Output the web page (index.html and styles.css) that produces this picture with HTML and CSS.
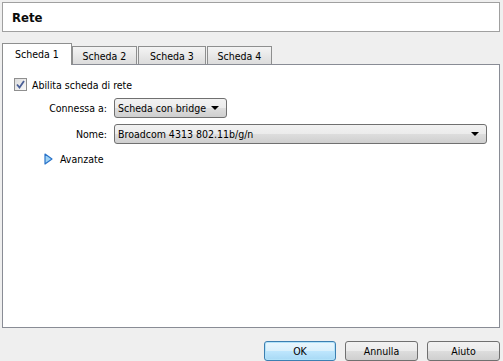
FILE: index.html
```html
<!DOCTYPE html>
<html>
<head>
<meta charset="utf-8">
<link rel="stylesheet" href="styles.css">
</head>
<body>
<div class="dialog">
  <div class="header"><span class="title">Rete</span></div>
  <div class="tabs">
    <div class="tab active">Scheda 1</div>
    <div class="tab t2">Scheda 2</div>
    <div class="tab t3">Scheda 3</div>
    <div class="tab t4">Scheda 4</div>
  </div>
  <div class="panel">
    <label class="check-row">
      <span class="checkbox">
        <svg width="9" height="9" viewBox="0 0 9 9"><path d="M1 4.5 L3.5 7.5 L8 1" fill="none" stroke="#4a5f97" stroke-width="1.8"/></svg>
      </span>
      <span>Abilita scheda di rete</span>
    </label>
    <div class="form">
      <span class="lbl">Connessa a:</span>
      <div class="combo small"><span>Scheda con bridge</span><span class="arrow"></span></div>
      <span class="lbl">Nome:</span>
      <div class="combo wide"><span>Broadcom 4313 802.11b/g/n</span><span class="arrow"></span></div>
    </div>
    <div class="adv">
      <svg width="9" height="12" viewBox="0 0 9 12"><path d="M1 1 L8 6 L1 11 Z" fill="#9fd3f5" stroke="#2a73c9" stroke-width="1.2" stroke-linejoin="round"/></svg>
      <span>Avanzate</span>
    </div>
  </div>
  <div class="buttons">
    <button class="btn default">OK</button>
    <button class="btn">Annulla</button>
    <button class="btn">Aiuto</button>
  </div>
</div>
</body>
</html>
```
FILE: styles.css
```css
html, body {
  margin: 0;
  padding: 0;
  background: #efefef;
}
body {
  width: 503px;
  height: 361px;
  overflow: hidden;
  font-family: "DejaVu Sans Condensed", "Liberation Sans", sans-serif;
  font-size: 10.5px;
  color: #000;
}
.dialog {
  display: flex;
  flex-direction: column;
  padding: 2px 3px 0 2px;
}
.header {
  height: 28px;
  border: 1px solid #a0a0a0;
  background: #fff;
  display: flex;
  align-items: center;
  padding-left: 9px;
}
.title {
  font-family: "DejaVu Sans Condensed", sans-serif;
  font-weight: bold;
  font-size: 13px;
  color: #0a0a0a;
}
.tabs {
  display: flex;
  align-items: flex-end;
  margin-top: 11px;
  height: 21px;
  position: relative;
  z-index: 1;
}
.tab {
  box-sizing: border-box;
  height: 18px;
  border: 1px solid #8e8f8f;
  border-bottom: none;
  background: linear-gradient(#f4f4f4, #dcdcdc);
  display: flex;
  align-items: center;
  justify-content: center;
  margin-right: 1px;
  white-space: nowrap;
}
.tab.active {
  height: 22px;
  width: 70px;
  background: #fff;
  margin-bottom: -1px;
  margin-right: 0;
  padding-bottom: 2px;
}
.t2 { width: 65px; }
.t3 { width: 68px; }
.t4 { width: 65px; }
.panel {
  height: 262px;
  border: 1px solid #898c95;
  background: #fff;
  padding: 0 11px;
}
.check-row {
  display: flex;
  align-items: center;
  gap: 5px;
  margin-top: 13px;
}
.checkbox {
  box-sizing: border-box;
  width: 13px;
  height: 13px;
  border: 1px solid #8f8f8f;
  background: linear-gradient(135deg, #dcdcdc, #fafafa);
  display: flex;
  align-items: center;
  justify-content: center;
}
.form {
  display: grid;
  grid-template-columns: 93px auto;
  column-gap: 7px;
  row-gap: 6px;
  margin-top: 7px;
  align-items: center;
}
.lbl {
  text-align: right;
  white-space: nowrap;
}
.combo {
  box-sizing: border-box;
  height: 20px;
  border: 1px solid #707070;
  border-radius: 3px;
  background: linear-gradient(#f2f2f2 0%, #ebebeb 50%, #dddddd 51%, #cfcfcf 100%);
  display: flex;
  align-items: center;
  justify-content: space-between;
  padding: 0 7px 0 3px;
  white-space: nowrap;
  overflow: hidden;
}
.combo.small { width: 113px; }
.combo.wide { width: 373px; }
.arrow {
  flex: none;
  width: 0;
  height: 0;
  border-left: 4px solid transparent;
  border-right: 4px solid transparent;
  border-top: 4px solid #000;
}
.adv {
  display: flex;
  align-items: center;
  gap: 7px;
  margin-top: 9px;
  padding-left: 30px;
}
.buttons {
  display: flex;
  justify-content: flex-end;
  gap: 9px;
  margin-top: 13px;
}
.btn {
  box-sizing: border-box;
  width: 73px;
  height: 20px;
  font: inherit;
  color: #000;
  border: 1px solid #707070;
  border-radius: 3px;
  background: linear-gradient(#f2f2f2 0%, #ebebeb 50%, #dddddd 51%, #cfcfcf 100%);
  padding: 0;
}
.btn.default {
  width: 72px;
  border-color: #3c7fb1;
  background: linear-gradient(#eaf6fd 0%, #d9f0fc 50%, #bee6fd 51%, #a7d9f5 100%);
  box-shadow: inset 0 0 0 1px #b2e2f9;
}
```
